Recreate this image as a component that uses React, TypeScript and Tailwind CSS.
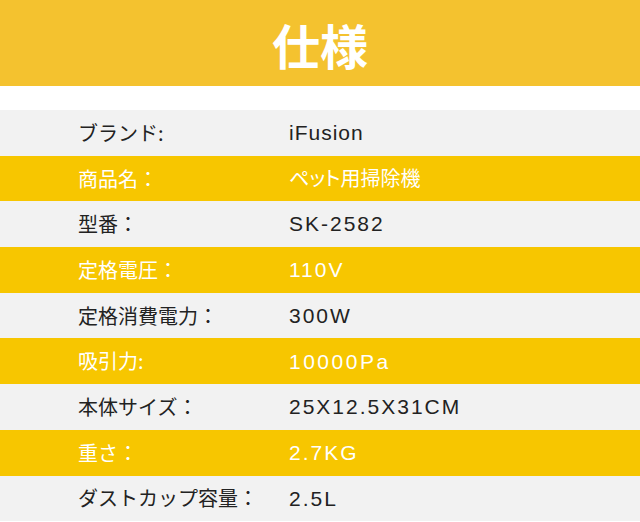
import React from "react";

type Spec = { label: string; value: string; valueClass: string };

const specs: Spec[] = [
  { label: "ブランド:", value: "iFusion", valueClass: "text-[21px] tracking-[1px]" },
  { label: "商品名：", value: "ペット用掃除機", valueClass: "text-[20px] [font-feature-settings:'palt']" },
  { label: "型番：", value: "SK-2582", valueClass: "text-[21px] tracking-[2px]" },
  { label: "定格電圧：", value: "110V", valueClass: "text-[21px] tracking-[2px]" },
  { label: "定格消費電力：", value: "300W", valueClass: "text-[21px] tracking-[2px]" },
  { label: "吸引力:", value: "10000Pa", valueClass: "text-[21px] tracking-[2.5px]" },
  { label: "本体サイズ：", value: "25X12.5X31CM", valueClass: "text-[21px] tracking-[2px]" },
  { label: "重さ：", value: "2.7KG", valueClass: "text-[21px] tracking-[2px]" },
  { label: "ダストカップ容量：", value: "2.5L", valueClass: "text-[21px] tracking-[2px]" },
];

const App: React.FC = () => {
  return (
    <div
      className="w-[640px] h-[522px] overflow-hidden bg-white"
      style={{ fontFamily: '"Liberation Sans", "Noto Sans CJK JP", sans-serif' }}
    >
      {/* Title bar */}
      <div className="h-[86px] bg-[#f4c22f] flex items-center justify-center">
        <h1 className="text-[48px] font-bold text-white leading-none pt-[12px]">仕様</h1>
      </div>

      <div className="h-[24px]" />

      {/* Spec rows, striped gray / yellow */}
      <div className="flex flex-col">
        {specs.map((s, i) => {
          const odd = i % 2 === 1;
          return (
            <div
              key={s.label}
              className={`h-[45.7px] shrink-0 flex items-center text-[20px] ${
                odd ? "bg-[#f7c600] text-white" : "bg-[#f2f2f2] text-[#222222]"
              }`}
            >
              <span className="w-[289px] pl-[78px] shrink-0 whitespace-nowrap font-['Noto_Sans_CJK_JP',sans-serif]">
                {s.label}
              </span>
              <span className={`whitespace-nowrap ${s.valueClass}`}>{s.value}</span>
            </div>
          );
        })}
      </div>
    </div>
  );
};

export default App;
